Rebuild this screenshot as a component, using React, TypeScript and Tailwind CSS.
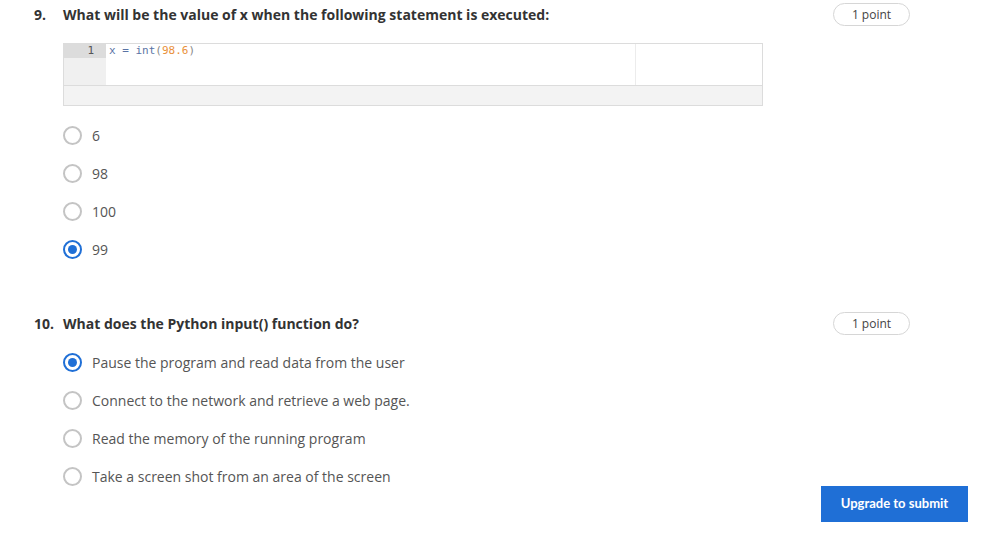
import React from 'react';

const font = { fontFamily: '"Open Sans", "Liberation Sans", sans-serif' };
const mono = { fontFamily: '"DejaVu Sans Mono", monospace' };

const Radio = ({ checked }: { checked?: boolean }) =>
  checked ? (
    <span className="flex h-[19px] w-[19px] shrink-0 items-center justify-center rounded-full border-[2px] border-[#1f6fd6]">
      <span className="h-[9px] w-[9px] rounded-full bg-[#1f6fd6]" />
    </span>
  ) : (
    <span className="h-[19px] w-[19px] shrink-0 rounded-full border-[2px] border-[#c4c4c4] bg-white" />
  );

const Options = ({ items, selected, top }: { items: string[]; selected: number; top: string }) => (
  <div className={`flex flex-col gap-[19px] pl-[29px] ${top}`}>
    {items.map((t, i) => (
      <div key={t} className="flex h-[19px] items-center gap-[10px]">
        <Radio checked={i === selected} />
        <span className="text-[14px] text-[#555]">{t}</span>
      </div>
    ))}
  </div>
);

const Header = ({ num, text }: { num: string; text: string }) => (
  <div className="flex items-center justify-between pr-[78px]">
    <div className="flex items-baseline text-[14px] font-bold text-[#333]">
      <span className="w-[29px]">{num}</span>
      <span>{text}</span>
    </div>
    <span className="flex h-[23px] w-[77px] items-center justify-center rounded-full border border-[#d6d6d6] text-[12px] text-[#444]">
      1 point
    </span>
  </div>
);

const App = () => {
  return (
    <div className="h-[542px] w-[988px] bg-white pl-[34px]" style={font}>
      {/* Question 9 */}
      <div className="pt-[3px]">
        <Header num="9." text="What will be the value of x when the following statement is executed:" />
      </div>

      <div className="ml-[29px] mt-[17px] w-[700px] border border-[#dcdcdc]">
        <div className="flex h-[42px] border-b border-[#dcdcdc]">
          <div className="w-[42px] bg-[#f0f0f0]">
            <div className="h-[14px] bg-[#dcdcdc] pr-[12px] text-right text-[11px] leading-[14px] text-[#555]" style={mono}>
              1
            </div>
          </div>
          <div className="flex flex-1">
            <div className="w-[530px] border-r border-[#ececec] pl-[3px] text-[11px] leading-[14px] text-[#5a73a5]" style={mono}>
              x = int<span className="text-[#888]">(</span>
              <span className="text-[#e9913a]">98.6</span>
              <span className="text-[#888]">)</span>
            </div>
          </div>
        </div>
        <div className="h-[19px] bg-[#f3f3f3]" />
      </div>

      <Options items={['6', '98', '100', '99']} selected={3} top="mt-[20px]" />

      {/* Question 10 */}
      <div className="mt-[53px]">
        <Header num="10." text="What does the Python input() function do?" />
      </div>

      <Options
        items={[
          'Pause the program and read data from the user',
          'Connect to the network and retrieve a web page.',
          'Read the memory of the running program',
          'Take a screen shot from an area of the screen',
        ]}
        selected={0}
        top="mt-[18px]"
      />

      <div className="flex justify-end pr-[20px]">
        <button className="h-[36px] w-[147px] bg-[#1f6fd6] text-[13px] font-bold text-white" style={{ fontFamily: 'Lato, "Liberation Sans", sans-serif' }}>
          Upgrade to submit
        </button>
      </div>
    </div>
  );
};

export default App;
